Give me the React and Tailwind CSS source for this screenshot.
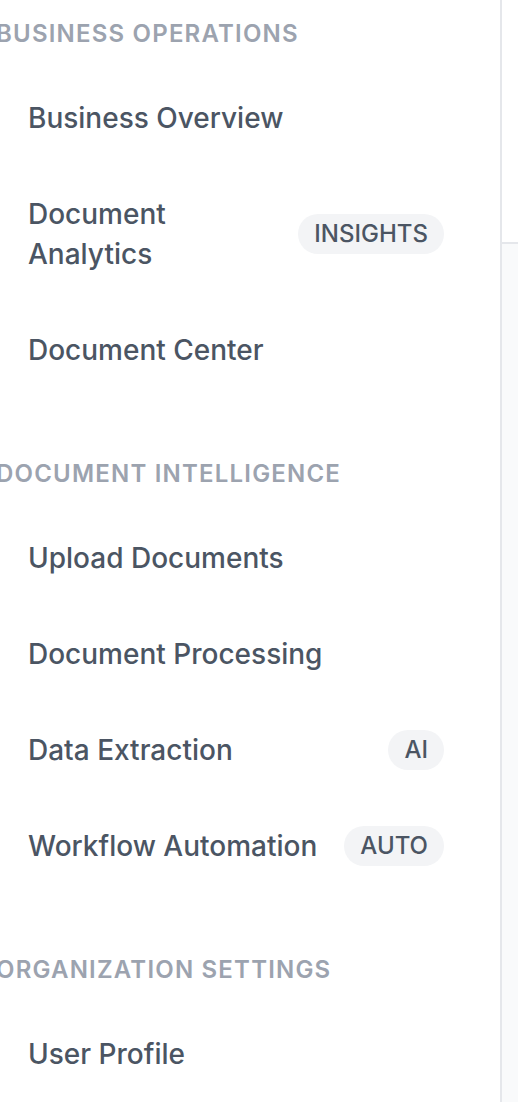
import React from 'react';

const sections = [
  {
    title: 'Business Operations',
    items: [
      { label: 'Business Overview' },
      { label: 'Document Analytics', badge: 'INSIGHTS' },
      { label: 'Document Center' },
    ],
  },
  {
    title: 'Document Intelligence',
    items: [
      { label: 'Upload Documents' },
      { label: 'Document Processing' },
      { label: 'Data Extraction', badge: 'AI' },
      { label: 'Workflow Automation', badge: 'AUTO' },
    ],
  },
  {
    title: 'Organization Settings',
    items: [{ label: 'User Profile' }],
  },
];

export default function App() {
  return (
    <div className="flex h-[1102px] w-[518px] overflow-hidden bg-white font-['Inter',sans-serif]">
      {/* Sidebar */}
      <aside className="w-[502px] shrink-0 border-r-2 border-[#e5e7eb] bg-white pt-[18px]">
        <nav className="flex flex-col gap-[64px]">
          {sections.map(section => (
            <div key={section.title}>
              <h3 className="-ml-[4px] mb-[24px] text-[24px] leading-[32px] font-semibold uppercase tracking-wider text-[#9ca3af]">
                {section.title}
              </h3>
              <ul className="flex flex-col gap-2 mr-[40px]">
                {section.items.map(item => (
                  <li
                    key={item.label}
                    className="flex items-center justify-between gap-6 pl-[28px] pr-4 py-6 rounded-xl"
                  >
                    <span className="text-[28px] leading-[40px] font-medium text-[#4b5563]">{item.label}</span>
                    {item.badge && (
                      <span className="shrink-0 rounded-full bg-[#f3f4f6] px-4 py-1 text-[24px] leading-[32px] font-medium text-[#4b5563]">
                        {item.badge}
                      </span>
                    )}
                  </li>
                ))}
              </ul>
            </div>
          ))}
        </nav>
      </aside>

      {/* Main area */}
      <main className="flex-1 flex flex-col">
        <div className="h-[244px] border-b-2 border-[#e5e7eb] bg-white"></div>
        <div className="flex-1 bg-[#f9fafb]"></div>
      </main>
    </div>
  );
}
